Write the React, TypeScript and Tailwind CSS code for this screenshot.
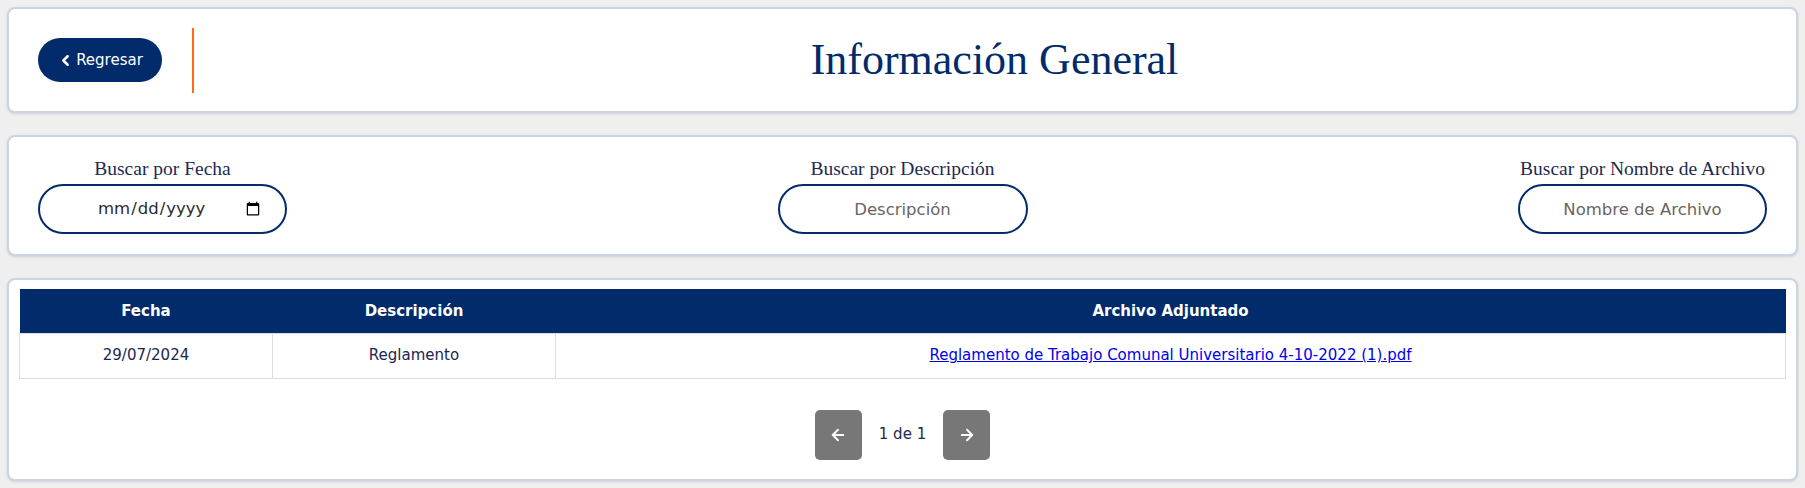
import React from "react";
import { ArrowLeft, ArrowRight, ChevronLeft } from "lucide-react";

const sans = "font-['DejaVu_Sans','Lato',sans-serif]";
const serif = "font-['Liberation_Serif','DejaVu_Serif',serif]";

type Row = {
  fecha: string;
  descripcion: string;
  archivo: string;
};

const rows: Row[] = [
  {
    fecha: "29/07/2024",
    descripcion: "Reglamento",
    archivo: "Reglamento de Trabajo Comunal Universitario 4-10-2022 (1).pdf",
  },
];

function Card({ className, children }: { className?: string; children: React.ReactNode }) {
  return (
    <div className={"bg-white rounded-lg border-2 border-[#cad5e3] shadow-sm " + (className ?? "")}>
      {children}
    </div>
  );
}

function SearchField({ label, children }: { label: string; children: React.ReactNode }) {
  return (
    <div className="flex flex-col items-center">
      <label className={`${serif} text-[19.5px] leading-[24px] text-[#1d2a4f] mb-[3px]`}>{label}</label>
      {children}
    </div>
  );
}

export default function App() {
  const inputCls = `${sans} h-[50px] w-[249px] rounded-full border-2 border-[#012b6b] bg-white text-[16.5px] text-[#2b2b2b] placeholder:text-[#6b6461] outline-none`;

  return (
    <div className="min-h-screen bg-[#efefef] px-[7px] pt-[7px] pb-[7px] flex flex-col gap-[22px]">
      <Card className="h-[106px] flex items-center px-[29px]">
        <button className={`${sans} h-[44px] w-[124px] rounded-full bg-[#012b6b] text-white text-[15px] flex items-center justify-center gap-[2px]`}>
          <ChevronLeft size={17} strokeWidth={3.5} />
          Regresar
        </button>
        <div className="ml-[30px] h-[65px] w-[2px] bg-[#ff6a13]" />
        <h1 className={`${serif} flex-1 pl-[28px] text-center text-[44px] text-[#012b6b] leading-none`}>
          Información General
        </h1>
      </Card>

      <Card className="h-[121px] flex items-center justify-between px-[29px]">
        <SearchField label="Buscar por Fecha">
          <input type="date" className={inputCls + " pl-[57px] pr-[22px]"} />
        </SearchField>
        <SearchField label="Buscar por Descripción">
          <input type="text" placeholder="Descripción" className={inputCls + " w-[250px] text-center"} />
        </SearchField>
        <SearchField label="Buscar por Nombre de Archivo">
          <input type="text" placeholder="Nombre de Archivo" className={inputCls + " w-[248px] text-center"} />
        </SearchField>
      </Card>

      <Card className="h-[203px] px-[10px] pt-[9px] flex flex-col">
        <table className={`${sans} w-full table-fixed border-collapse text-[15px]`}>
          <colgroup>
            <col className="w-[253px]" />
            <col className="w-[283px]" />
            <col />
          </colgroup>
          <thead>
            <tr className="bg-[#012b6b] text-white h-[44px]">
              <th className="font-bold">Fecha</th>
              <th className="font-bold">Descripción</th>
              <th className="font-bold">Archivo Adjuntado</th>
            </tr>
          </thead>
          <tbody>
            {rows.map((r, i) => (
              <tr key={i} className="h-[45px] text-center text-[#1b2550]">
                <td className="border border-[#dcdcdc]">{r.fecha}</td>
                <td className="border border-[#dcdcdc]">{r.descripcion}</td>
                <td className="border border-[#dcdcdc]">
                  <a href="#" className="text-[#0000ee] underline">
                    {r.archivo}
                  </a>
                </td>
              </tr>
            ))}
          </tbody>
        </table>

        <div className="mt-[31px] flex items-center justify-center gap-[17px]">
          <button className="h-[50px] w-[47px] rounded-[5px] bg-[#777777] text-white flex items-center justify-center">
            <ArrowLeft size={18} strokeWidth={2.5} />
          </button>
          <span className={`${sans} text-[15px] text-[#1d2a4f]`}>1 de 1</span>
          <button className="h-[50px] w-[47px] rounded-[5px] bg-[#777777] text-white flex items-center justify-center">
            <ArrowRight size={18} strokeWidth={2.5} />
          </button>
        </div>
      </Card>
    </div>
  );
}
